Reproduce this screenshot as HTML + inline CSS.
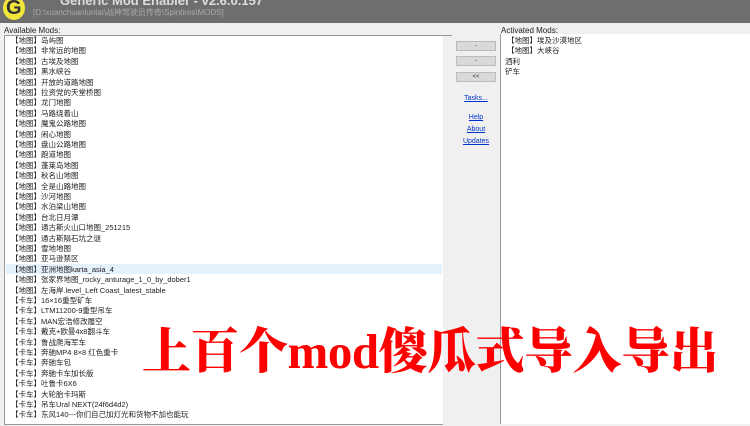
<!DOCTYPE html>
<html><head><meta charset="utf-8"><style>
*{margin:0;padding:0;box-sizing:border-box}
body{width:750px;height:422px;overflow:hidden;background:#f0f0f0;font-family:"Liberation Sans","Noto Sans CJK SC",sans-serif;position:relative}
.title{position:absolute;left:0;top:0;width:750px;height:23px;background:#6e6e6e}
.logo{position:absolute;left:3px;top:-4px;width:22px;height:24px;border-radius:50%;background:#f2e63a;color:#333;font:bold 20px "Liberation Sans";line-height:24px;text-indent:3px}
.t1{position:absolute;left:60px;top:-7px;color:#ddd;font:bold 13px "Liberation Sans"}
.t2{position:absolute;left:33px;top:7px;color:#aaa;font-size:8px}
.lbl{position:absolute;font-size:8px;color:#222}
.list{position:absolute;left:4px;top:35px;width:448px;height:390px;background:#fff;border:1px solid #999}
.row{position:absolute;left:6px;height:10.4px;font-size:7.5px;line-height:10.4px;color:#222;white-space:nowrap}
.hl{position:absolute;left:1px;width:436px;height:10px;background:#e5f1fb}
.sb{position:absolute;left:438px;top:0;width:9px;height:390px;background:#f0f0f0}
.th{position:absolute;left:440px;top:10px;width:6px;height:166px;background:#cdcdcd}
.btn{position:absolute;left:456px;width:40px;height:10px;background:#d9d9d9;border:1px solid #bbb;font-size:6px;text-align:center;line-height:8px;color:#333}
.lk{position:absolute;font-size:7px;color:#0033cc;text-decoration:underline;text-align:center;width:48px;left:452px}
.right{position:absolute;left:500px;top:34px;width:250px;height:390px;background:#fff;border-left:1px solid #999}
.big{position:absolute;left:142px;top:313px;color:#f00;font:900 49px "Noto Serif CJK SC",serif;white-space:nowrap;letter-spacing:-0.5px}
.big span{font-family:"Liberation Serif",serif;font-weight:bold}
</style></head><body>
<div class="title"><div class="logo">G</div><div class="t1">Generic Mod Enabler - v2.6.0.157</div><div class="t2">[D:\xuanchuanluntai\战神驾驶员传奇\Spintires\MODS]</div></div>
<div class="lbl" style="left:4px;top:26px">Available Mods:</div>
<div class="lbl" style="left:501px;top:26px">Activated Mods:</div>
<div class="list">
<div class="hl" style="top:228px"></div>
<div class="row" style="top:0">【地图】岛屿图</div>
<div class="row" style="top:10.4px">【地图】非常远的地图</div>
<div class="row" style="top:20.8px">【地图】古埃及地图</div>
<div class="row" style="top:31.2px">【地图】黑水峡谷</div>
<div class="row" style="top:41.6px">【地图】开放的道路地图</div>
<div class="row" style="top:52px">【地图】拉资党的天堂桥图</div>
<div class="row" style="top:62.4px">【地图】龙门地图</div>
<div class="row" style="top:72.8px">【地图】马路绕着山</div>
<div class="row" style="top:83.2px">【地图】魔鬼公路地图</div>
<div class="row" style="top:93.6px">【地图】闹心地图</div>
<div class="row" style="top:104px">【地图】盘山公路地图</div>
<div class="row" style="top:114.4px">【地图】跑道地图</div>
<div class="row" style="top:124.8px">【地图】蓬莱岛地图</div>
<div class="row" style="top:135.2px">【地图】秋名山地图</div>
<div class="row" style="top:145.6px">【地图】全是山路地图</div>
<div class="row" style="top:156px">【地图】沙河地图</div>
<div class="row" style="top:166.4px">【地图】水泊梁山地图</div>
<div class="row" style="top:176.8px">【地图】台北日月潭</div>
<div class="row" style="top:187.2px">【地图】通古斯火山口地图_251215</div>
<div class="row" style="top:197.6px">【地图】通古斯隕石坑之谜</div>
<div class="row" style="top:208px">【地图】雪地地图</div>
<div class="row" style="top:218.4px">【地图】亚马逊禁区</div>
<div class="row" style="top:228.8px">【地图】亚洲地图karta_asia_4</div>
<div class="row" style="top:239.2px">【地图】张家界地图_rocky_anturage_1_0_by_dober1</div>
<div class="row" style="top:249.6px">【地图】左海岸.level_Left Coast_latest_stable</div>
<div class="row" style="top:260px">【卡车】16×16重型矿车</div>
<div class="row" style="top:270.4px">【卡车】LTM11200-9重型吊车</div>
<div class="row" style="top:280.8px">【卡车】MAN宏浩修改履空</div>
<div class="row" style="top:291.2px">【卡车】戴克+欧曼4x8翻斗车</div>
<div class="row" style="top:301.6px">【卡车】鲁战爬海军车</div>
<div class="row" style="top:312px">【卡车】奔驰MP4 8×8 红色重卡</div>
<div class="row" style="top:322.4px">【卡车】奔驰车包</div>
<div class="row" style="top:332.8px">【卡车】奔驰卡车加长版</div>
<div class="row" style="top:343.2px">【卡车】吐鲁卡6X6</div>
<div class="row" style="top:353.6px">【卡车】大轮胎卡玛斯</div>
<div class="row" style="top:364px">【卡车】吊车Ural NEXT(24f6d4d2)</div>
<div class="row" style="top:374.4px">【卡车】东风140---你们自己加灯光和货物不加也能玩</div>
<div class="sb"><div class="th"></div></div>
</div>
<div class="btn" style="top:41px">-</div>
<div class="btn" style="top:56px">-</div>
<div class="btn" style="top:72px">&lt;&lt;</div>
<div class="lk" style="top:95px">Tasks...</div>
<div class="lk" style="top:114px">Help</div>
<div class="lk" style="top:126px">About</div>
<div class="lk" style="top:138px">Updates</div>
<div class="right">
<div class="row" style="top:2px">【地图】埃及沙漠地区</div>
<div class="row" style="top:12.4px">【地图】大峡谷</div>
<div class="row" style="top:22.8px;left:4px">洒利</div>
<div class="row" style="top:33.2px;left:4px">铲车</div>
</div>
<div class="big">上百个<span>mod</span>傻瓜式导入导出</div>
</body></html>
